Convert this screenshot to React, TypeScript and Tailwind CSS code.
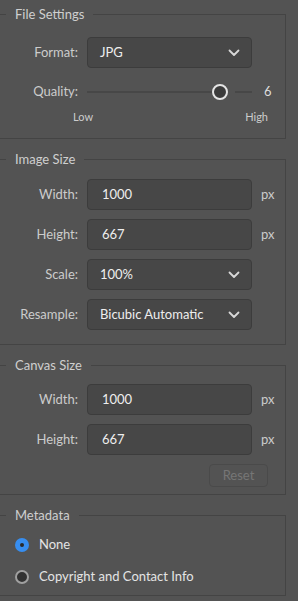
import React from 'react';

const Chevron = () => (
  <svg width="12" height="8" viewBox="0 0 12 8" className="text-[#d8d8d8]">
    <path d="M1.5 1.5 L6 6 L10.5 1.5" fill="none" stroke="currentColor" strokeWidth="1.8" strokeLinecap="round" strokeLinejoin="round" />
  </svg>
);

function Section({ title, children, className = '' }: { title: string; children: React.ReactNode; className?: string }) {
  return (
    <fieldset className={`ml-[-10px] w-[296px] border border-[#444444] pl-[9px] pr-0 ${className}`}>
      <legend className="ml-[6px] px-[9px] text-[13px] leading-[18px] text-[#cfcfcf]">{title}</legend>
      {children}
    </fieldset>
  );
}

function Row({ label, children, unit }: { label: string; children: React.ReactNode; unit?: string }) {
  return (
    <div className="flex items-center h-[31px]">
      <div className="w-[78px] text-right text-[13px] text-[#cccccc]">{label}</div>
      <div className="ml-[9px] w-[165px]">{children}</div>
      {unit && <div className="ml-[9px] text-[13px] text-[#cccccc]">{unit}</div>}
    </div>
  );
}

function Field({ value }: { value: string }) {
  return (
    <div className="h-[31px] rounded-[4px] border border-[#3c3c3c] bg-[#474747] flex items-center pl-[14px] text-[13px] text-[#eeeeee]">
      {value}
    </div>
  );
}

function Dropdown({ value }: { value: string }) {
  return (
    <div className="h-[31px] rounded-[4px] border border-[#3c3c3c] bg-[#474747] flex items-center justify-between pl-[12px] pr-[11px] text-[13px] text-[#eeeeee]">
      <span>{value}</span>
      <Chevron />
    </div>
  );
}

export default function App() {
  return (
    <div className="w-[298px] h-[601px] overflow-hidden bg-[#535353] pt-[5px] font-['Lato',sans-serif]">
      <Section title="File Settings" className="pb-[14px]">
        <div className="pt-[14px]">
          <Row label="Format:">
            <Dropdown value="JPG" />
          </Row>
          <div className="flex items-center h-[20px] mt-[14px]">
            <div className="w-[78px] text-right text-[13px] text-[#cccccc]">Quality:</div>
            <div className="ml-[9px] w-[165px] flex items-center">
              <div className="h-[2px] w-[125px] bg-[#474747]" />
              <div className="w-[16px] h-[16px] rounded-full border-2 border-[#e4e4e4] bg-[#3b3b3b] shrink-0" />
              <div className="h-[2px] flex-1 ml-[7px] bg-[#474747]" />
            </div>
            <div className="ml-[12px] text-[13px] text-[#dddddd]">6</div>
          </div>
          <div className="flex justify-between w-[195px] ml-[73px] mt-[8px] text-[11px] leading-[14px] text-[#cccccc]">
            <span>Low</span>
            <span>High</span>
          </div>
        </div>
      </Section>

      <Section title="Image Size" className="mt-[11px] pb-[14px]">
        <div className="pt-[11px] flex flex-col gap-[9px]">
          <Row label="Width:" unit="px"><Field value="1000" /></Row>
          <Row label="Height:" unit="px"><Field value="667" /></Row>
          <Row label="Scale:"><Dropdown value="100%" /></Row>
          <Row label="Resample:"><Dropdown value="Bicubic Automatic" /></Row>
        </div>
      </Section>

      <Section title="Canvas Size" className="mt-[11px] pb-[7px]">
        <div className="pt-[10px] flex flex-col gap-[9px]">
          <Row label="Width:" unit="px"><Field value="1000" /></Row>
          <Row label="Height:" unit="px"><Field value="667" /></Row>
        </div>
        <div className="flex justify-end w-[268px] mt-[9px]">
          <button className="w-[59px] h-[23px] rounded-[4px] border border-[#4a4a4a] text-[13px] text-[#767676]">Reset</button>
        </div>
      </Section>

      <Section title="Metadata" className="mt-[11px] pb-[10px]">
        <div className="pt-[13px] flex flex-col gap-[16px] pl-[15px]">
          <label className="flex items-center h-[16px] text-[13px] text-[#e4e4e4]">
            <span className="w-[14px] h-[14px] rounded-full bg-[#378ef0] flex items-center justify-center">
              <span className="w-[4px] h-[4px] rounded-full bg-[#2a2a2a]" />
            </span>
            <span className="ml-[10px]">None</span>
          </label>
          <label className="flex items-center h-[16px] text-[13px] text-[#e4e4e4]">
            <span className="w-[14px] h-[14px] rounded-full border-2 border-[#a0a0a0] bg-[#323232]" />
            <span className="ml-[10px]">Copyright and Contact Info</span>
          </label>
        </div>
      </Section>
    </div>
  );
}
